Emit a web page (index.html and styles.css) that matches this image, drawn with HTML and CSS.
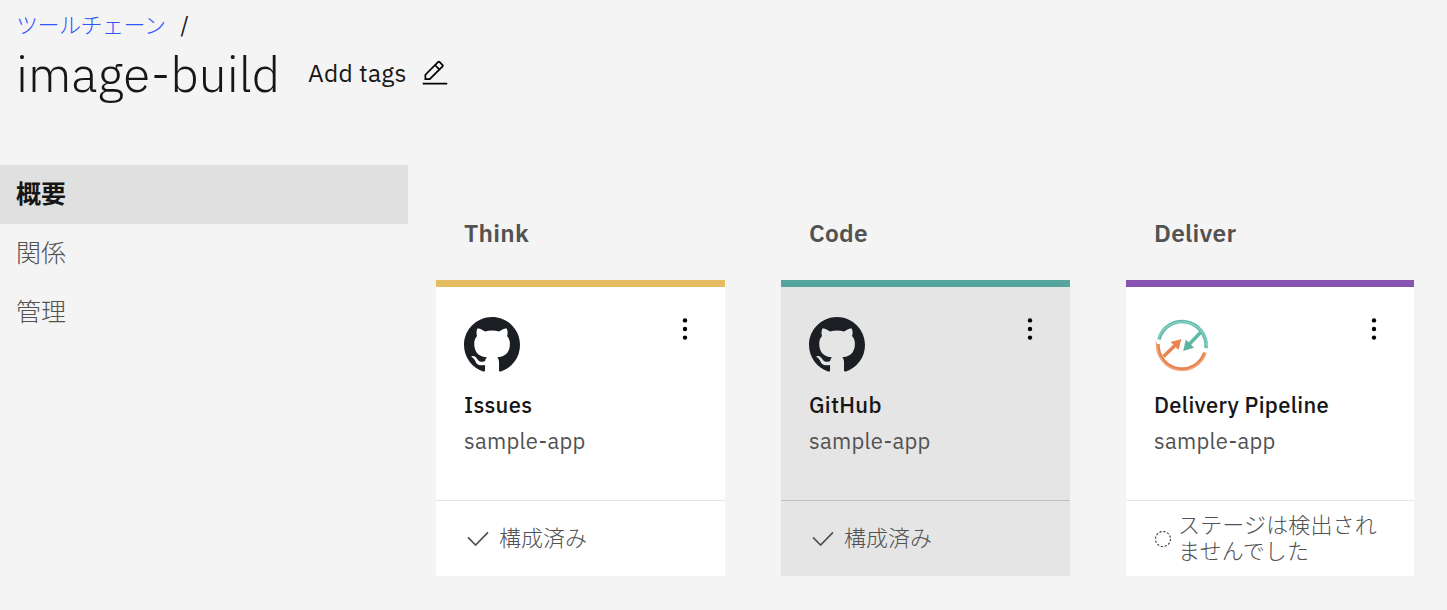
FILE: index.html
```html
<!DOCTYPE html>
<html lang="ja">

<head>
  <meta charset="UTF-8">
  <meta name="viewport" content="width=device-width, initial-scale=1.0">
  <title>image-build</title>
  <link rel="stylesheet" href="styles.css">
</head>

<body>
  <!-- shared icons -->
  <svg class="sprite" width="0" height="0">
    <symbol id="github" viewBox="0 0 16 16">
      <path d="M8 0C3.58 0 0 3.58 0 8c0 3.54 2.29 6.53 5.47 7.59.4.07.55-.17.55-.38 0-.19-.01-.82-.01-1.49-2.01.37-2.53-.49-2.69-.94-.09-.23-.48-.94-.82-1.13-.28-.15-.68-.52-.01-.53.63-.01 1.08.58 1.23.82.72 1.21 1.87.87 2.33.66.07-.52.28-.87.51-1.07-1.78-.2-3.64-.89-3.64-3.95 0-.87.31-1.59.82-2.15-.08-.2-.36-1.02.08-2.12 0 0 .67-.21 2.2.82.64-.18 1.32-.27 2-.27s1.36.09 2 .27c1.53-1.04 2.2-.82 2.2-.82.44 1.1.16 1.92.08 2.12.51.56.82 1.27.82 2.15 0 3.07-1.87 3.75-3.65 3.95.29.25.54.73.54 1.48 0 1.07-.01 1.93-.01 2.2 0 .21.15.46.55.38A8.01 8.01 0 0 0 16 8c0-4.42-3.58-8-8-8z"/>
    </symbol>
    <symbol id="menu" viewBox="0 0 28 28">
      <circle cx="14" cy="5.4" r="2.2"/>
      <circle cx="14" cy="14" r="2.2"/>
      <circle cx="14" cy="22.6" r="2.2"/>
    </symbol>
    <symbol id="check" viewBox="0 0 28 28">
      <path d="M4 13.4l7.6 7.6L24 8.4" fill="none" stroke="currentColor" stroke-width="1.7"/>
    </symbol>
  </svg>

  <header class="header">
    <nav class="breadcrumb"><a href="#">ツールチェーン</a><span>/</span></nav>
    <div class="title-row">
      <h1>image-build</h1>
      <span class="tags">Add tags</span>
      <svg class="edit" viewBox="0 0 32 32">
        <path d="M2 27h28v2H2zM25.4 9c.8-.8.8-2 0-2.8l-3.6-3.6c-.8-.8-2-.8-2.8 0l-15 15V24h6.4zm-5-5L24 7.6l-3 3L17.4 7zM6 22v-3.6l10-10 3.6 3.6-10 10z"/>
      </svg>
    </div>
  </header>

  <div class="layout">
    <ul class="side-nav">
      <li class="active">概要</li>
      <li>関係</li>
      <li>管理</li>
    </ul>

    <main class="columns">
      <section>
        <h2>Think</h2>
        <div class="card think">
          <div class="card-body">
            <div class="card-top">
              <svg class="logo"><use href="#github"/></svg>
              <svg class="menu"><use href="#menu"/></svg>
            </div>
            <h3>Issues</h3>
            <p>sample-app</p>
          </div>
          <div class="status">
            <svg class="check"><use href="#check"/></svg>
            <span>構成済み</span>
          </div>
        </div>
      </section>

      <section>
        <h2>Code</h2>
        <div class="card code">
          <div class="card-body">
            <div class="card-top">
              <svg class="logo"><use href="#github"/></svg>
              <svg class="menu"><use href="#menu"/></svg>
            </div>
            <h3>GitHub</h3>
            <p>sample-app</p>
          </div>
          <div class="status">
            <svg class="check"><use href="#check"/></svg>
            <span>構成済み</span>
          </div>
        </div>
      </section>

      <section>
        <h2>Deliver</h2>
        <div class="card deliver">
          <div class="card-body">
            <div class="card-top">
              <svg class="logo pipeline" viewBox="0 0 56 56">
                <g stroke="#62b9a9" stroke-width="3.6">
                  <path d="M4.9 22.5A24 24 0 0 1 52 31"/>
                  <path d="M46.5 15.5L34.500 28"/>
                </g>
                <path d="M4 22A25.2 25.2 0 0 1 52.900 27" stroke="#86d3c5" stroke-width="1.3"/>
                <path d="M51.200 26h3l-.4 6.500z" fill="#86d3c5"/>
                <path d="M29.200 34l2.600-11.500 8.200 8.200z" fill="#5cb3a3"/>
                <g stroke="#e98450" stroke-width="3.6">
                  <path d="M4 27A24 24 0 0 0 50.800 35.500"/>
                  <path d="M9.500 39.500l12-11.500"/>
                </g>
                <path d="M2.800 28A25.200 25.200 0 0 0 52 36" stroke="#f2ad86" stroke-width="1.3"/>
                <path d="M4.800 30H2l-.4-6.500z" fill="#ef9c6e"/>
                <path d="M27.400 22l-2.900 11-7.800-8z" fill="#ea8550"/>
              </svg>
              <svg class="menu"><use href="#menu"/></svg>
            </div>
            <h3>Delivery Pipeline</h3>
            <p>sample-app</p>
          </div>
          <div class="status">
            <svg class="dashed" viewBox="0 0 18 18">
              <circle cx="9" cy="9" r="7.5" fill="none" stroke="#393939" stroke-width="1.1" stroke-dasharray="2.2 1.727"/>
            </svg>
            <span>ステージは検出されませんでした</span>
          </div>
        </div>
      </section>
    </main>
  </div>
</body>

</html>
```

FILE: styles.css
```css
* {
  box-sizing: border-box;
}

body {
  background: #f4f4f4;
  color: #161616;
  font-family: "IBM Plex Sans", "Open Sans", "Noto Sans CJK JP", sans-serif;
  margin: 0;
}

h1, h2, h3, p, ul {
  margin: 0;
  padding: 0;
}

svg {
  flex: none;
}

.sprite {
  position: absolute;
}

.header {
  height: 165px;
  padding: 11px 16px 0;
}

.breadcrumb {
  display: flex;
  font-size: 22px;
  gap: 15px;
  line-height: 28px;
}

.breadcrumb a {
  color: #2f55ff;
  font-weight: 300;
  letter-spacing: -0.5px;
  text-decoration: none;
}

.title-row {
  align-items: center;
  display: flex;
  height: 68px;
}

h1 {
  font-size: 49.5px;
  font-weight: 300;
  line-height: 68px;
  padding-top: 2px;
  width: 292px;
}

.tags {
  font-size: 24.5px;
  letter-spacing: 0.28px;
  width: 113px;
}

.edit {
  height: 28px;
  margin-top: -1px;
  width: 28px;
}

.layout {
  display: flex;
}

.side-nav {
  color: #525252;
  font-size: 25px;
  font-weight: 300;
  list-style: none;
  width: 408px;
}

.side-nav li {
  height: 58.8px;
  line-height: 58px;
  padding-left: 16px;
}

.side-nav .active {
  background: #e0e0e0;
  color: #161616;
  font-weight: 700;
}

.columns {
  display: grid;
  gap: 56px;
  grid-template-columns: 289px 289px 288px;
  padding: 50px 0 0 28px;
}

h2 {
  color: #525252;
  font-size: 24.5px;
  font-weight: 600;
  height: 65px;
  letter-spacing: 0.28px;
  line-height: 36px;
  padding-left: 28px;
}

.card {
  background: #fff;
  border-top: 7px solid #e4bc62;
  height: 296px;
}

.card-body {
  height: 213px;
  padding: 30px 28px 0;
}

.card-top {
  display: flex;
  height: 70px;
  justify-content: space-between;
}

.logo {
  fill: #1b1f23;
  height: 56px;
  width: 56px;
}

.pipeline {
  fill: none;
}

.menu {
  height: 28px;
  margin: -2px -1.5px 0 0;
  width: 28px;
}

h3 {
  font-size: 22px;
  font-weight: 500;
  letter-spacing: 0.32px;
  line-height: 36px;
}

.card p {
  color: #525252;
  font-size: 22px;
  letter-spacing: 0.28px;
  line-height: 36px;
}

.status {
  align-items: center;
  border-top: 1px solid #e5e5e5;
  color: #525252;
  display: flex;
  font-size: 22px;
  font-weight: 300;
  height: 76px;
  line-height: 26px;
  padding: 0 28px 2px;
}

.check {
  height: 28px;
  margin-right: 7px;
  width: 28px;
}

.dashed {
  height: 18px;
  margin: 2px 6px 0 0;
  width: 18px;
}

.deliver .status {
  letter-spacing: 0.15px;
}

.code {
  background: #e5e5e5;
  border-color: #55a59d;
}

.code .status {
  border-color: #c0c0c0;
}

.deliver {
  border-color: #8753b1;
}
```
